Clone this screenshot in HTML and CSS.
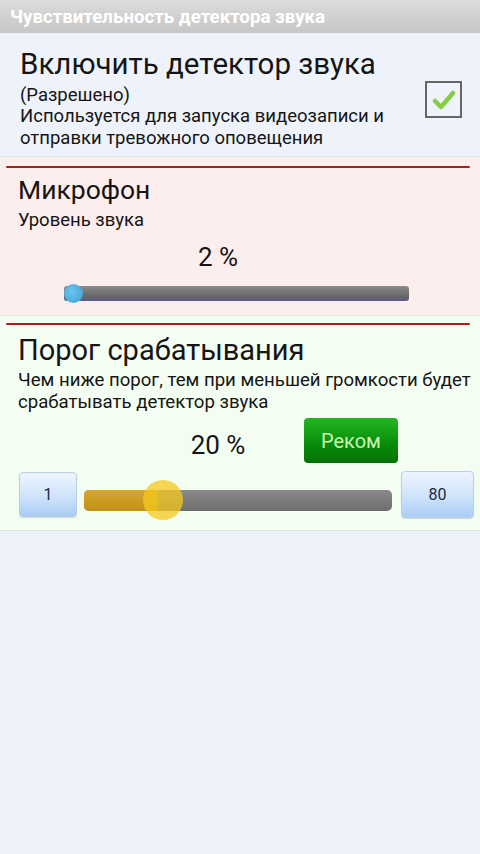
FILE: index.html
```html
<!DOCTYPE html>
<html lang="ru">
<head>
<meta charset="utf-8">
<link rel="stylesheet" href="styles.css">
</head>
<body>
<div class="titlebar">Чувствительность детектора звука</div>
<div class="sec sec-enable">
  <div class="enable-text">
    <div class="h1">Включить детектор звука</div>
    <div class="p p-lg">(Разрешено)</div>
    <div class="p p-lg">Используется для запуска видеозаписи и отправки тревожного оповещения</div>
  </div>
  <div class="checkbox">
    <svg width="26" height="26" viewBox="0 0 26 26"><path d="M4 14 L10 20 L22 6" fill="none" stroke="#86cc44" stroke-width="4.5" stroke-linecap="round" stroke-linejoin="round"/></svg>
  </div>
</div>
<div class="sec sec-mic">
  <div class="redline"></div>
  <div class="h2">Микрофон</div>
  <div class="p p-lg">Уровень звука</div>
  <div class="value">2 %</div>
  <div class="meter">
    <div class="meter-track"></div>
    <div class="meter-thumb"></div>
  </div>
</div>
<div class="sec sec-thr">
  <div class="redline"></div>
  <div class="h2 h2b">Порог срабатывания</div>
  <div class="p p-sm">Чем ниже порог, тем при меньшей громкости будет срабатывать детектор звука</div>
  <div class="value-row">
    <div class="value">20 %</div>
    <div class="rec-btn">Реком</div>
  </div>
  <div class="slider-row">
    <div class="small-btn btn-min">1</div>
    <div class="slider">
      <div class="slider-fill" style="width:24%"></div>
      <div class="slider-thumb" style="left:25.5%"></div>
    </div>
    <div class="small-btn btn-max">80</div>
  </div>
</div>
</body>
</html>
```
FILE: styles.css
```css
html, body {
  margin: 0;
  padding: 0;
}
body {
  width: 480px;
  height: 854px;
  background: #eef3fb;
  font-family: Roboto, "Noto Sans", sans-serif;
  color: #151515;
  overflow: hidden;
}
.titlebar {
  height: 33px;
  box-sizing: border-box;
  padding: 6px 0 0 10px;
  background: linear-gradient(#dcdcdc, #c6c6c6);
  color: #ffffff;
  font-weight: bold;
  font-size: 18.7px;
  line-height: 22px;
  white-space: nowrap;
}
.sec {
  border-bottom: 1px solid #dfe5e0;
}
.sec-enable {
  display: flex;
  align-items: center;
  padding: 12px 18px 6px 20px;
  height: 124px;
  box-sizing: border-box;
  background: #eef3fb;
}
.enable-text {
  flex: 1;
}
.h1 {
  font-size: 29.5px;
  line-height: 36px;
  margin-bottom: 3px;
}
.p {
  line-height: 21.5px;
}
.p-lg {
  font-size: 18.5px;
}
.p-sm {
  font-size: 18.6px;
  line-height: 22px;
}
.checkbox {
  width: 33px;
  height: 33px;
  border: 2px solid #666;
  display: flex;
  align-items: center;
  justify-content: center;
  margin-left: 18px;
  margin-top: 4px;
}
.sec-mic {
  background: #fdeeee;
  height: 159px;
  box-sizing: border-box;
  padding: 9px 0 0 18px;
}
.redline {
  height: 2px;
  background: #a42020;
  margin: 0 10px 0 -12px;
  border-radius: 1px;
}
.h2 {
  font-size: 26.5px;
  line-height: 30px;
  margin-top: 7px;
  margin-bottom: 5px;
}
.value {
  font-size: 26px;
  line-height: 30px;
  text-align: center;
  width: 400px;
  margin-top: 10px;
}
.meter {
  position: relative;
  margin: 14px 0 0 46px;
  width: 345px;
  height: 16px;
}
.meter-track {
  height: 15px;
  border-radius: 3px;
  background: linear-gradient(#8c8c8c, #666 70%, #5a5a8c);
}
.meter-thumb {
  position: absolute;
  left: 0;
  top: -1.5px;
  width: 19px;
  height: 19px;
  border-radius: 50%;
  background: radial-gradient(circle at 40% 40%, #6ec4f0, #3a9fd8);
}
.sec-thr {
  background: #f4fdf1;
  height: 215px;
  box-sizing: border-box;
  padding: 7px 0 0 18px;
}
.h2b {
  font-size: 29px;
  margin-top: 10px;
  margin-bottom: 4px;
}
.value-row {
  display: flex;
  align-items: center;
  margin-top: 13px;
}
.value-row .value {
  width: 400px;
  margin-top: 0;
  margin-right: -114px;
}
.rec-btn {
  width: 94px;
  height: 45px;
  border-radius: 4px;
  background: linear-gradient(#22b822, #098a09 60%, #067006);
  color: #c8f5b0;
  font-size: 20px;
  display: flex;
  align-items: center;
  justify-content: center;
  margin-top: -8px;
}
.slider-row {
  display: flex;
  align-items: center;
  margin-top: 8px;
}
.small-btn {
  height: 45px;
  border-radius: 4px;
  background: linear-gradient(#eef5ff, #cfe3fb 55%, #a9cdf5);
  border: 1px solid #b8cde6;
  box-sizing: border-box;
  color: #1d2a44;
  font-size: 16px;
  display: flex;
  align-items: center;
  justify-content: center;
  box-shadow: 0 1px 1px rgba(0,0,0,0.15);
}
.btn-min {
  width: 58px;
  margin-left: 1px;
}
.btn-max {
  width: 73px;
  height: 47px;
  margin-left: 9px;
}
.slider {
  position: relative;
  width: 308px;
  height: 21px;
  margin-left: 7px;
  margin-top: 11px;
  border-radius: 5px;
  background: linear-gradient(#8a8a8a, #6e6e6e);
}
.slider-fill {
  height: 100%;
  border-radius: 5px 0 0 5px;
  background: linear-gradient(#d6a82e, #c09018);
}
.slider-thumb {
  position: absolute;
  top: 50%;
  width: 40px;
  height: 40px;
  margin: -20px 0 0 -20px;
  border-radius: 50%;
  background: rgba(245, 200, 30, 0.75);
}
```
